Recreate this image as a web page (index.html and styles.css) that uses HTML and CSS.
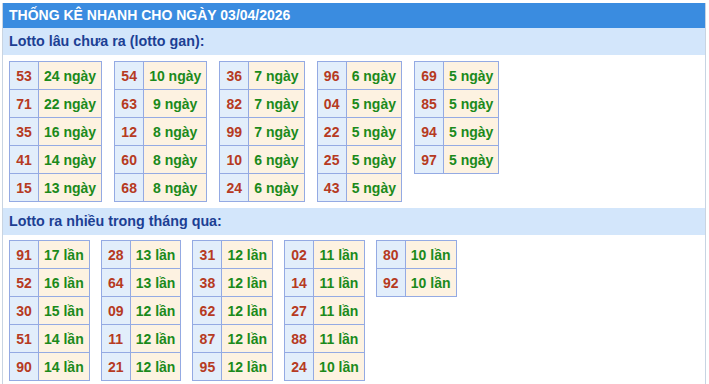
FILE: index.html
```html
<!DOCTYPE html>
<html lang="vi">
<head>
<meta charset="utf-8">
<title>Thống kê nhanh</title>
<link rel="stylesheet" href="styles.css">
</head>
<body>
<div class="wrap">
  <div class="head">THỐNG KÊ NHANH CHO NGÀY 03/04/2026</div>
  <div class="sub">Lotto lâu chưa ra (lotto gan):</div>
  <div class="tables">
    <table class="t"><tr><td class="n">53</td><td class="v">24 ngày</td></tr><tr><td class="n">71</td><td class="v">22 ngày</td></tr><tr><td class="n">35</td><td class="v">16 ngày</td></tr><tr><td class="n">41</td><td class="v">14 ngày</td></tr><tr><td class="n">15</td><td class="v">13 ngày</td></tr></table>
    <table class="t"><tr><td class="n">54</td><td class="v">10 ngày</td></tr><tr><td class="n">63</td><td class="v">9 ngày</td></tr><tr><td class="n">12</td><td class="v">8 ngày</td></tr><tr><td class="n">60</td><td class="v">8 ngày</td></tr><tr><td class="n">68</td><td class="v">8 ngày</td></tr></table>
    <table class="t"><tr><td class="n">36</td><td class="v">7 ngày</td></tr><tr><td class="n">82</td><td class="v">7 ngày</td></tr><tr><td class="n">99</td><td class="v">7 ngày</td></tr><tr><td class="n">10</td><td class="v">6 ngày</td></tr><tr><td class="n">24</td><td class="v">6 ngày</td></tr></table>
    <table class="t"><tr><td class="n">96</td><td class="v">6 ngày</td></tr><tr><td class="n">04</td><td class="v">5 ngày</td></tr><tr><td class="n">22</td><td class="v">5 ngày</td></tr><tr><td class="n">25</td><td class="v">5 ngày</td></tr><tr><td class="n">43</td><td class="v">5 ngày</td></tr></table>
    <table class="t"><tr><td class="n">69</td><td class="v">5 ngày</td></tr><tr><td class="n">85</td><td class="v">5 ngày</td></tr><tr><td class="n">94</td><td class="v">5 ngày</td></tr><tr><td class="n">97</td><td class="v">5 ngày</td></tr></table>
  </div>
  <div class="sub">Lotto ra nhiều trong tháng qua:</div>
  <div class="tables tables2">
    <table class="t"><tr><td class="n">91</td><td class="v">17 lần</td></tr><tr><td class="n">52</td><td class="v">16 lần</td></tr><tr><td class="n">30</td><td class="v">15 lần</td></tr><tr><td class="n">51</td><td class="v">14 lần</td></tr><tr><td class="n">90</td><td class="v">14 lần</td></tr></table>
    <table class="t"><tr><td class="n">28</td><td class="v">13 lần</td></tr><tr><td class="n">64</td><td class="v">13 lần</td></tr><tr><td class="n">09</td><td class="v">12 lần</td></tr><tr><td class="n">11</td><td class="v">12 lần</td></tr><tr><td class="n">21</td><td class="v">12 lần</td></tr></table>
    <table class="t"><tr><td class="n">31</td><td class="v">12 lần</td></tr><tr><td class="n">38</td><td class="v">12 lần</td></tr><tr><td class="n">62</td><td class="v">12 lần</td></tr><tr><td class="n">87</td><td class="v">12 lần</td></tr><tr><td class="n">95</td><td class="v">12 lần</td></tr></table>
    <table class="t"><tr><td class="n">02</td><td class="v">11 lần</td></tr><tr><td class="n">14</td><td class="v">11 lần</td></tr><tr><td class="n">27</td><td class="v">11 lần</td></tr><tr><td class="n">88</td><td class="v">11 lần</td></tr><tr><td class="n">24</td><td class="v">10 lần</td></tr></table>
    <table class="t"><tr><td class="n">80</td><td class="v">10 lần</td></tr><tr><td class="n">92</td><td class="v">10 lần</td></tr></table>
  </div>
</div>
</body>
</html>
```
FILE: styles.css
```css
html, body {
  margin: 0;
  padding: 0;
  background: #fff;
}
body {
  font-family: "Liberation Sans", Arial, sans-serif;
  font-size: 14px;
  font-weight: bold;
}
.wrap {
  margin: 3px 3px 0 2px;
  border-left: 1px solid #c8d4e2;
  border-right: 1px solid #c8d4e2;
  height: 381px;
  box-sizing: border-box;
}
.head {
  background: #3a8ce0;
  color: #fff;
  height: 25px;
  line-height: 25px;
  padding-left: 6px;
  font-size: 14px;
}
.sub {
  background: #d3e6fb;
  color: #1c3f94;
  height: 27px;
  line-height: 27px;
  padding-left: 6px;
  font-size: 14.3px;
}
.tables {
  display: flex;
  align-items: flex-start;
  gap: 12px;
  padding: 6px 6px 6px 6px;
}
.tables2 {
  gap: 11px;
  padding-top: 5px;
  padding-bottom: 0;
}
.t {
  border-collapse: collapse;
}
.t td {
  border: 1px solid #94aae3;
  height: 27px;
  text-align: center;
  white-space: nowrap;
}
.t td.n {
  background: #e2eefb;
  color: #b63a22;
  padding: 0 6px;
  width: 16px;
}
.t td.v {
  background: #fdf2e1;
  color: #1b8a1b;
  padding: 0 5px;
}
```
